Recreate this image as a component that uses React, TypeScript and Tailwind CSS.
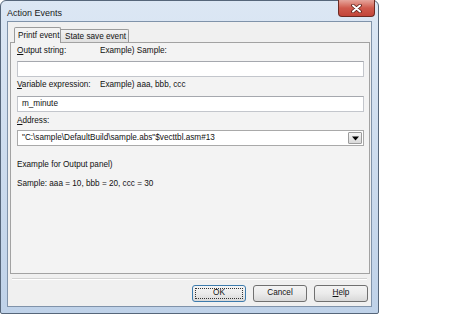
// Action Events dialog (Windows 7 style)
const Field = ({ children }: { children?: React.ReactNode }) => (
  <div className="h-[16px] flex items-center pl-[4px] bg-white border border-[#c3c6cc] border-t-[#a5a8ae]">
    {children}
  </div>
);

const Button = ({
  children,
  primary,
}: {
  children: React.ReactNode;
  primary?: boolean;
}) => (
  <div
    className={`relative w-[54px] h-[17px] flex items-center justify-center rounded-[3px] border bg-gradient-to-b from-[#f4f4f4] via-[#ebebeb] to-[#d8d8d8] ${
      primary ? "border-[#3d7bad]" : "border-[#707070]"
    }`}
  >
    {primary && (
      <div className="absolute inset-[2px] border border-dotted border-[#333]" />
    )}
    {children}
  </div>
);

export default function App() {
  return (
    <div className="w-[452px] h-[316px] bg-white font-['Liberation_Sans',Arial,sans-serif] text-[8.2px] text-[#111]">
      <div className="w-[379px] h-[314px] flex flex-col px-[6px] pb-[6px] border border-[#56667a] rounded-t-[6px] rounded-b-[2px] bg-gradient-to-b from-[#dce7f4] via-[#cddcee] to-[#bfd2e9]">
        {/* title bar */}
        <div className="h-[20px] -mx-[6px] flex items-start">
          <div className="pl-[6px] pt-[7px] text-[9px] leading-[10px] text-[#1a1a1a]">
            Action Events
          </div>
          <div className="ml-auto mr-[3px] -mt-[1px] w-[37px] h-[17px] flex items-center justify-center rounded-b-[4px] border border-[#6d2a22] border-t-0 bg-gradient-to-b from-[#e5a59c] via-[#cf5a4d] to-[#c2453a]">
            <svg width="11" height="9" viewBox="0 0 11 9">
              <path d="M2 1.5 L9 7.5 M9 1.5 L2 7.5" stroke="#5b1f18" strokeWidth="3.6" strokeLinecap="round" />
              <path d="M2 1.5 L9 7.5 M9 1.5 L2 7.5" stroke="#ffffff" strokeWidth="2" strokeLinecap="round" />
            </svg>
          </div>
        </div>

        {/* client area */}
        <div className="flex-1 flex flex-col border border-[#8093aa] bg-[#f0f0f0]">
          {/* tab strip */}
          <div className="h-[20px] flex items-end pl-[6px]">
            <div className="relative z-10 -mb-[1px] w-[47px] h-[16px] pt-[3px] pl-[3px] leading-[10px] whitespace-nowrap border border-b-0 border-[#9b9b9b] bg-[#f3f3f3] rounded-t-[2px]">
              Printf event
            </div>
            <div className="w-[68px] h-[13px] pt-[2px] pl-[4px] leading-[10px] whitespace-nowrap border border-l-0 border-b-0 border-[#9b9b9b] rounded-tr-[2px] bg-gradient-to-b from-[#f2f2f2] to-[#e0e0e0]">
              State save event
            </div>
          </div>

          {/* tab page */}
          <div className="ml-[2px] mr-[1px] h-[232px] flex flex-col pl-[6px] pr-[5px] border border-[#a2a2a2] bg-[#f3f3f3]">
            <div className="mt-[2px] h-[12px] leading-[12px] flex">
              <div className="w-[83px]">
                <span className="underline">O</span>utput string:
              </div>
              <div>Example) Sample:</div>
            </div>
            <div className="mt-[4px]">
              <Field />
            </div>

            <div className="mt-[2px] h-[12px] leading-[12px] flex">
              <div className="w-[83px]">
                <span className="underline">V</span>ariable expression:
              </div>
              <div>Example) aaa, bbb, ccc</div>
            </div>
            <div className="mt-[5px]">
              <Field>m_minute</Field>
            </div>

            <div className="mt-[3px] h-[12px] leading-[12px]">
              <span className="underline">A</span>ddress:
            </div>
            <div className="mt-[3px] h-[16px] flex items-center pl-[4px] pr-[1px] bg-white border border-[#a9a9a9]">
              <div className="flex-1">
                "C:\sample\DefaultBuild\sample.abs"$vecttbl.asm#13
              </div>
              <div className="w-[14px] h-[12px] flex items-center justify-center border border-[#9c9c9c] rounded-[1px] bg-gradient-to-b from-[#f6f6f6] to-[#d9d9d9]">
                <svg width="7" height="5" viewBox="0 0 7 5">
                  <path d="M0 0.5 H7 L3.5 4.5 Z" fill="#000" />
                </svg>
              </div>
            </div>

            <div className="mt-[13px] h-[12px] leading-[12px]">
              Example for Output panel)
            </div>
            <div className="mt-[7px] h-[12px] leading-[12px]">
              Sample: aaa = 10, bbb = 20, ccc = 30
            </div>
          </div>

          {/* separator */}
          <div className="mt-[4px] mx-[4px] h-[2px] border-t border-[#d3d3d3] border-b border-b-white" />

          {/* buttons */}
          <div className="mt-[5px] flex justify-end gap-[7px] pr-[3px]">
            <Button primary>OK</Button>
            <Button>Cancel</Button>
            <Button>
              <span>
                <span className="underline">H</span>elp
              </span>
            </Button>
          </div>
        </div>
      </div>
    </div>
  );
}
